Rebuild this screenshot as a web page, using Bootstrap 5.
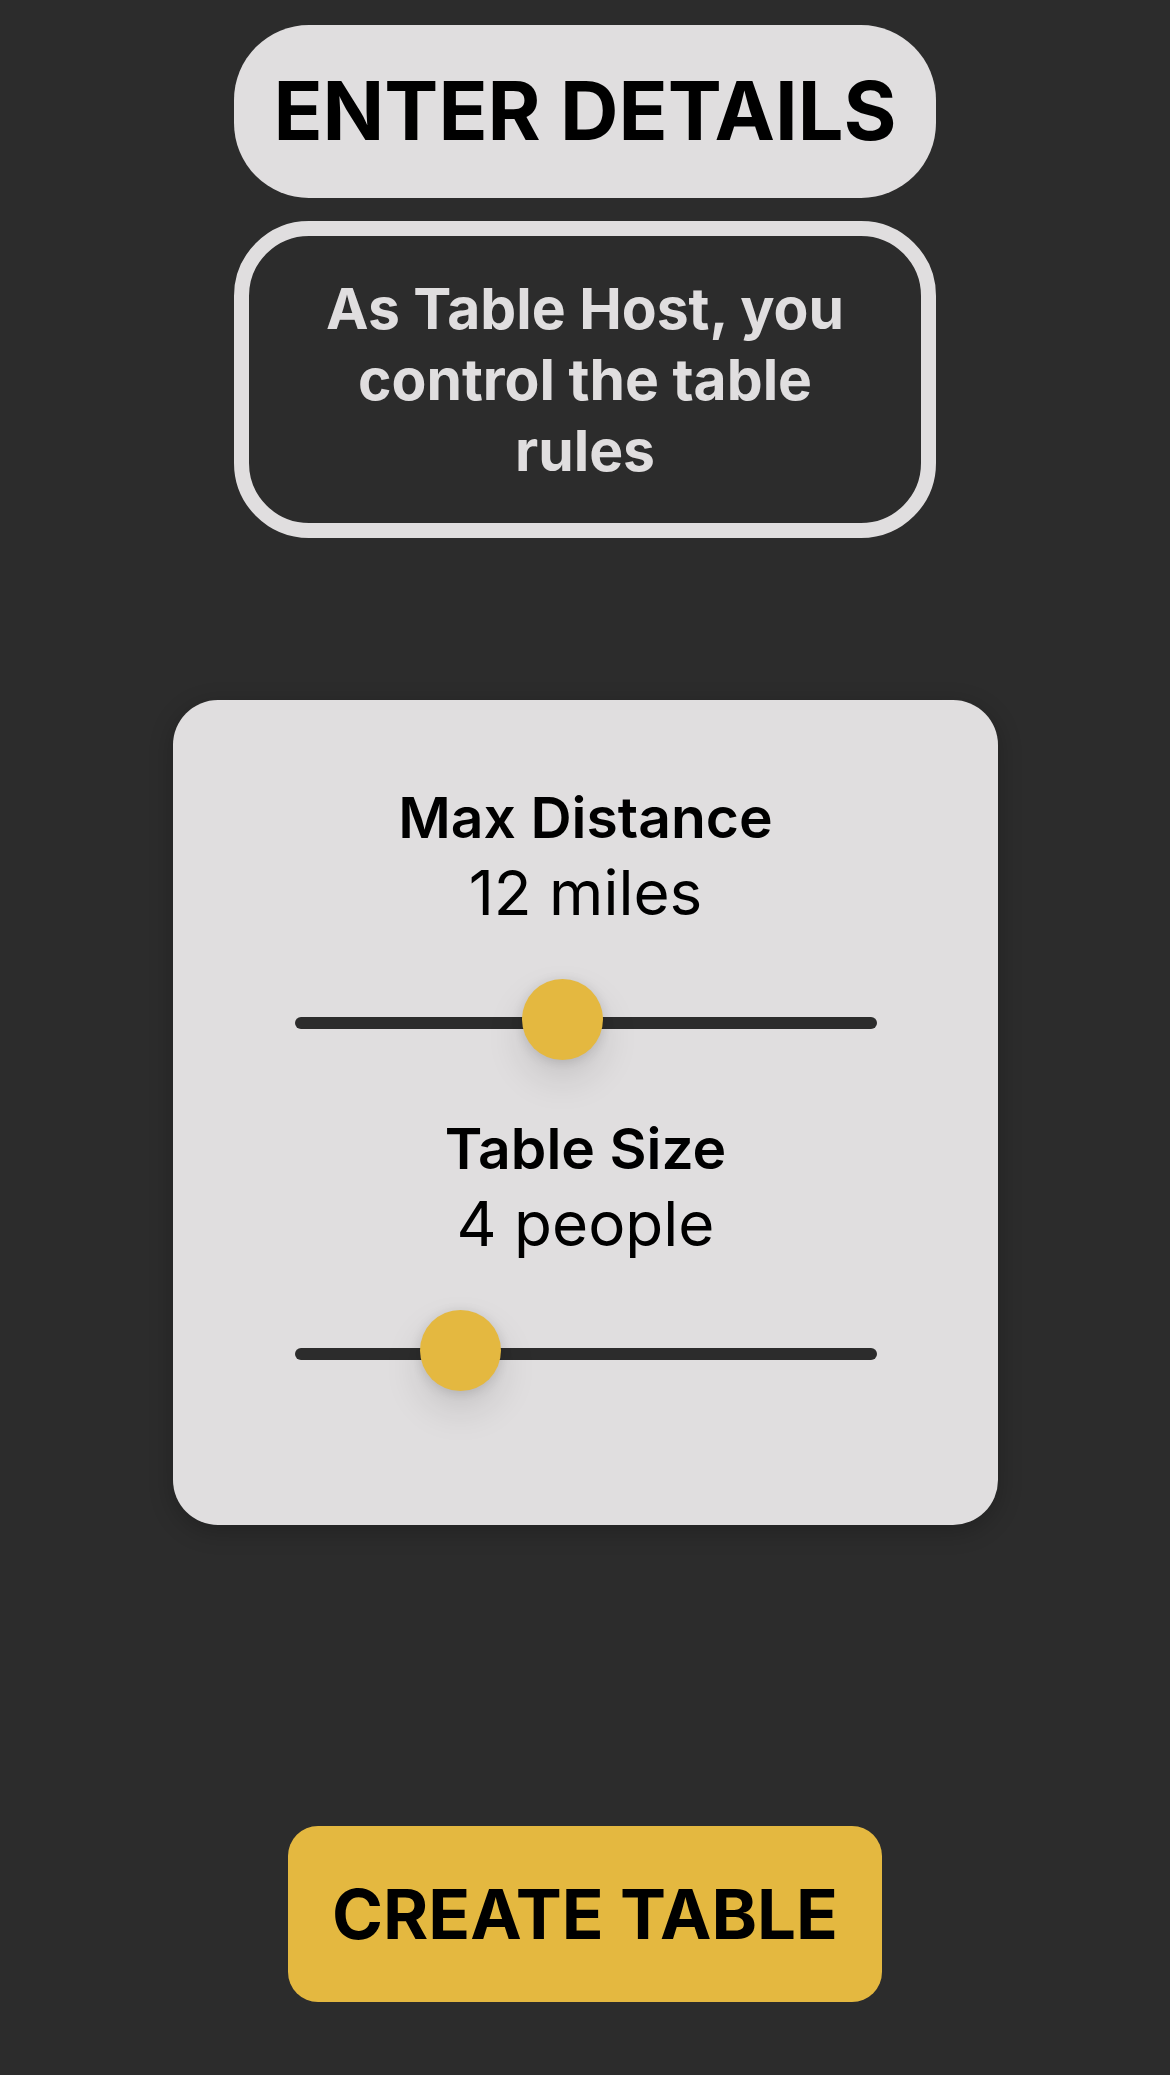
<!DOCTYPE html>
<html lang="en">
<head>
<meta charset="utf-8">
<meta name="viewport" content="width=device-width, initial-scale=1">
<title>Enter Details</title>
<link href="https://cdn.jsdelivr.net/npm/bootstrap@5.3.0/dist/css/bootstrap.min.css" rel="stylesheet">
<style>
  :root { --ink: #2c2c2c; --paper: #e0dedf; --gold: #e4b840; }
  body { background: var(--ink); color: #000; font-family: Inter, "Liberation Sans", sans-serif; }
  .host-page { padding: 25px 24px 73px; }
  .host-intro { width: 60%; min-width: 702px; gap: 23px; }
  .host-title { background: var(--paper); border-radius: 75px; padding: 36px 0; font-size: 81px; line-height: 101px; font-weight: 700; white-space: nowrap; }
  .host-note { border: 15px solid var(--paper); border-radius: 75px; padding: 37px 48px; color: var(--paper); font-size: 57px; line-height: 71px; font-weight: 700; }
  .rules-card { max-width: 825px; margin-top: 162px; padding: 82px 121px 130px 122px; gap: 49px; background: var(--paper); border-radius: 45px; box-shadow: 0 6px 24px rgba(0, 0, 0, .24); }
  .rule-label { font-size: 57px; line-height: 72px; font-weight: 600; }
  .rule-value { font-size: 62px; line-height: 78px; margin-bottom: 50px; }
  .rule-range { display: block; height: 82px; }
  .rule-range::-webkit-slider-runnable-track { height: 12px; border-radius: 6px; background: var(--ink); }
  .rule-range::-webkit-slider-thumb { width: 81px; height: 81px; margin-top: -38px; border-radius: 50%; background: var(--gold); box-shadow: 0 2px 12px rgba(0, 0, 0, .12), 0 18px 39px rgba(0, 0, 0, .12); }
  .rule-range::-webkit-slider-thumb:active { background: var(--gold); }
  .rule-range::-moz-range-track { height: 12px; border-radius: 6px; background: var(--ink); }
  .rule-range::-moz-range-thumb { width: 81px; height: 81px; border-radius: 50%; background: var(--gold); }
  .create-btn { --bs-btn-bg: var(--gold); --bs-btn-color: #000; --bs-btn-hover-bg: #d5a932; --bs-btn-hover-color: #000; --bs-btn-active-bg: #c99e2b; width: 594px; padding: 44px 0; border: 0; border-radius: 30px; font-size: 69px; line-height: 88px; font-weight: 700; white-space: nowrap; }
</style>
</head>
<body>
<main class="host-page d-flex flex-column align-items-center min-vh-100 text-center">
  <header class="host-intro d-flex flex-column">
    <h1 class="host-title m-0">ENTER DETAILS</h1>
    <p class="host-note m-0">As Table Host, you control the table rules</p>
  </header>
  <form class="d-flex flex-column align-items-center flex-grow-1 w-100">
    <section class="rules-card d-flex flex-column w-100">
      <div>
        <label class="rule-label d-block" for="distance">Max Distance</label>
        <output class="rule-value d-block" for="distance" id="distanceValue">12 miles</output>
        <input class="form-range rule-range" type="range" id="distance" min="2" max="24" value="12">
      </div>
      <div>
        <label class="rule-label d-block" for="tableSize">Table Size</label>
        <output class="rule-value d-block" for="tableSize" id="tableSizeValue">4 people</output>
        <input class="form-range rule-range" type="range" id="tableSize" min="2" max="10" value="4">
      </div>
    </section>
    <button class="btn create-btn mt-auto" type="button">CREATE TABLE</button>
  </form>
</main>
<script src="https://cdn.jsdelivr.net/npm/bootstrap@5.3.0/dist/js/bootstrap.bundle.min.js"></script>
<script>
  const bind = (id, unit) => {
    const range = document.getElementById(id);
    range.addEventListener('input', () => {
      document.getElementById(id + 'Value').textContent = range.value + ' ' + unit;
    });
  };
  bind('distance', 'miles');
  bind('tableSize', 'people');
</script>
</body>
</html>
